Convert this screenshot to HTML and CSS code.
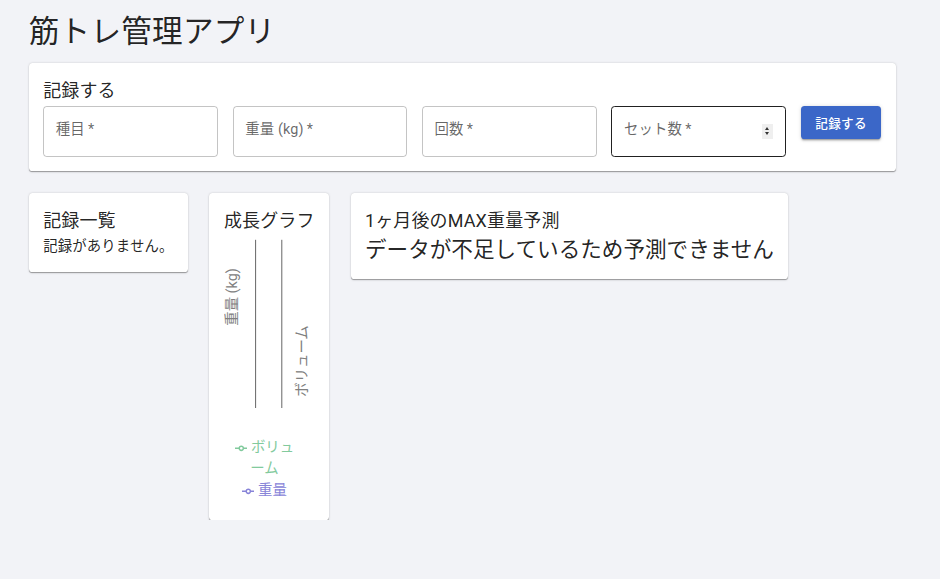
FILE: index.html
```html
<!DOCTYPE html>
<html lang="ja">
<head>
<meta charset="utf-8">
<title>筋トレ管理アプリ</title>
<link rel="stylesheet" href="styles.css">
</head>
<body>
<div class="page">
  <h1 class="title">筋トレ管理アプリ</h1>

  <section class="card form-card">
    <h2 class="h6">記録する</h2>
    <div class="form-row">
      <div class="field"><span class="label">種目&thinsp;*</span></div>
      <div class="field"><span class="label">重量 (kg)&thinsp;*</span></div>
      <div class="field"><span class="label">回数&thinsp;*</span></div>
      <div class="field field-active">
        <span class="label">セット数&thinsp;*</span>
        <span class="spinner"><span class="tri up"></span><span class="tri down"></span></span>
      </div>
      <button class="btn" type="button">記録する</button>
    </div>
  </section>

  <div class="row">
    <section class="card list-card">
      <h2 class="h6">記録一覧</h2>
      <p class="body1">記録がありません。</p>
    </section>

    <section class="card">
      <h2 class="h6">成長グラフ</h2>
      <div class="chart">
        <svg class="chart-svg" width="90" height="201" viewBox="0 0 90 201">
          <line x1="31.6" y1="3.8" x2="31.6" y2="172" stroke="#666" stroke-width="1"/>
          <line x1="57.8" y1="3.8" x2="57.8" y2="172" stroke="#666" stroke-width="1"/>
          <text x="8" y="61" transform="rotate(-90 8 61)" text-anchor="middle" dominant-baseline="central" class="axis-label">重量 (kg)</text>
          <text x="78" y="125" transform="rotate(-90 78 125)" text-anchor="middle" dominant-baseline="central" class="axis-label">ボリューム</text>
        </svg>
        <ul class="legend">
          <li class="legend-item vol">
            <svg class="legend-icon" width="12.6" height="12.6" viewBox="0 0 32 32"><path stroke-width="4" fill="none" stroke="#82ca9d" d="M0,16h10.67A5.33,5.33,0,1,1,21.33,16H32M21.33,16A5.33,5.33,0,1,1,10.67,16"/></svg><span>ボリューム</span>
          </li>
          <li class="legend-item wt">
            <svg class="legend-icon" width="12.6" height="12.6" viewBox="0 0 32 32"><path stroke-width="4" fill="none" stroke="#8884d8" d="M0,16h10.67A5.33,5.33,0,1,1,21.33,16H32M21.33,16A5.33,5.33,0,1,1,10.67,16"/></svg><span>重量</span>
          </li>
        </ul>
      </div>
    </section>

    <section class="card">
      <h2 class="h6">1ヶ月後のMAX重量予測</h2>
      <p class="h5">データが不足しているため予測できません</p>
    </section>
  </div>
</div>
</body>
</html>
```

FILE: styles.css
```css
html, body {
  margin: 0;
  padding: 0;
  background: #f2f3f7;
}

body {
  font-family: Roboto, "Noto Sans CJK JP", sans-serif;
  color: rgba(0, 0, 0, 0.87);
}

.page {
  padding: 12.6px 0 0 28.8px;
}

.title {
  margin: 0 0 12.6px;
  font-size: 30.6px;
  line-height: 37.8px;
  font-weight: 400;
  letter-spacing: 0.0075em;
}

.card {
  background: #fff;
  border-radius: 3.6px;
  box-shadow: 0 1.8px 0.9px -0.9px rgba(0, 0, 0, 0.2), 0 0.9px 0.9px 0 rgba(0, 0, 0, 0.14), 0 0.9px 2.7px 0 rgba(0, 0, 0, 0.12);
  padding: 14.4px;
  box-sizing: border-box;
}

.form-card {
  width: 867px;
}

.list-card {
  min-width: 159px;
}

.h6 {
  margin: 0;
  font-size: 18px;
  line-height: 28.8px;
  font-weight: 400;
  letter-spacing: 0.0075em;
}

.h5 {
  margin: 0;
  font-size: 21.6px;
  line-height: 28.8px;
  font-weight: 400;
}

.body1 {
  margin: 0;
  font-size: 14.4px;
  line-height: 21.6px;
  letter-spacing: 0.00938em;
}

.form-row {
  display: flex;
  align-items: flex-start;
  gap: 14.6px;
}

.field {
  flex: 1 1 0;
  height: 50.4px;
  box-sizing: border-box;
  border: 1px solid rgba(0, 0, 0, 0.23);
  border-radius: 3.6px;
  position: relative;
  display: flex;
  align-items: flex-start;
  padding: 12.8px 11.6px 0;
}

.field-active {
  border-color: rgba(0, 0, 0, 0.87);
}

.label {
  font-size: 14.4px;
  line-height: 20.7px;
  color: rgba(0, 0, 0, 0.6);
  letter-spacing: 0.00938em;
}

.spinner {
  position: absolute;
  right: 12.6px;
  top: 16.8px;
  width: 11px;
  height: 15px;
  background: #efefef;
  display: flex;
  flex-direction: column;
  align-items: center;
  justify-content: center;
  gap: 2px;
}

.tri {
  width: 0;
  height: 0;
  border-left: 2.5px solid transparent;
  border-right: 2.5px solid transparent;
}

.tri.up {
  border-bottom: 3px solid #333;
}

.tri.down {
  border-top: 3px solid #333;
}

.btn {
  flex: none;
  height: 33px;
  padding: 0 14.4px;
  border: none;
  border-radius: 3.6px;
  background: #3b67c8;
  color: #fff;
  font-family: Roboto, "Noto Sans CJK JP", sans-serif;
  font-size: 12.6px;
  font-weight: 500;
  letter-spacing: 0.02857em;
  box-shadow: 0 2.7px 0.9px -1.8px rgba(0, 0, 0, 0.2), 0 1.8px 1.8px 0 rgba(0, 0, 0, 0.14), 0 0.9px 4.5px 0 rgba(0, 0, 0, 0.12);
}

.row {
  display: flex;
  align-items: flex-start;
  gap: 21.6px;
  margin-top: 21.6px;
}

.chart {
  width: 90.2px;
  height: 270px;
  display: flex;
  flex-direction: column;
}

.chart-svg {
  display: block;
  flex: none;
}

.axis-label {
  font-family: Roboto, "Noto Sans CJK JP", sans-serif;
  font-size: 14.4px;
  fill: #808080;
}

.legend {
  list-style: none;
  width: 81px;
  margin: 0 0 0 4.5px;
  padding: 0;
  text-align: center;
  font-size: 14.4px;
  line-height: 21.6px;
}

.legend-item {
  display: inline-block;
  margin-right: 9px;
}

.legend-item.vol {
  color: #82ca9d;
}

.legend-item.wt {
  color: #8884d8;
}

.legend-icon {
  display: inline-block;
  vertical-align: middle;
  margin-right: 3.6px;
}
```
